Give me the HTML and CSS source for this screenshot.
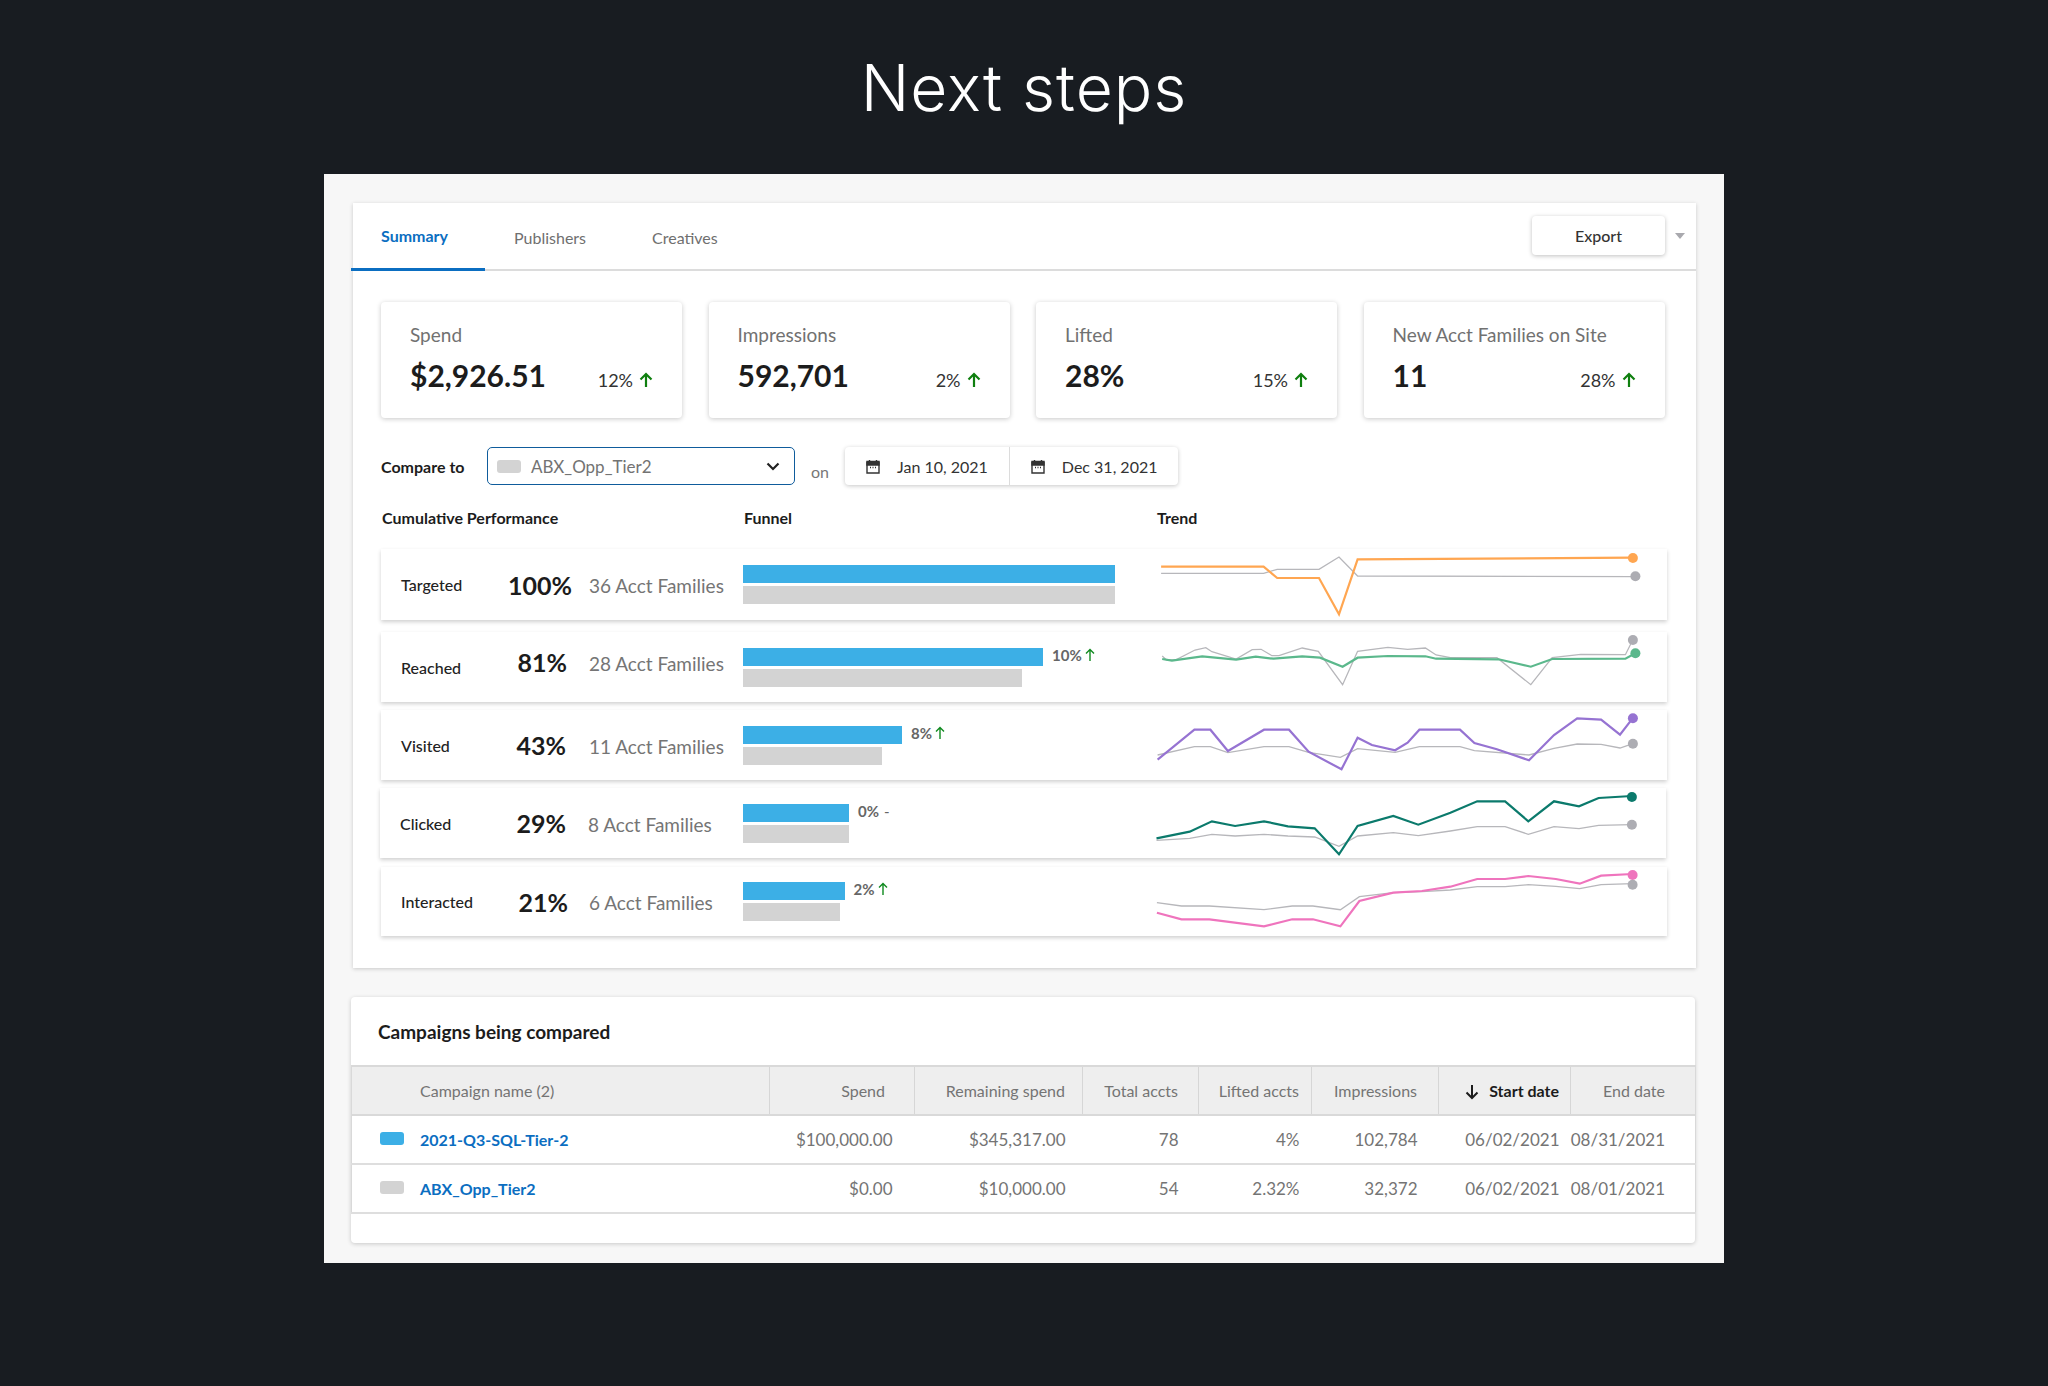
FILE: index.html
```html
<!DOCTYPE html>
<html>
<head>
    <title>Next steps</title>
    <meta name="viewport" content="width=device-width, initial-scale=1">
    <link rel="stylesheet" href="styles.css">
</head>
<body>
    <h1 class="pageTitle">Next steps</h1>

    <div class="frame">
        <div class="panel">
            <div class="tabBar">
                <a class="tab tabActive">Summary</a>
                <a class="tab">Publishers</a>
                <a class="tab">Creatives</a>
                <div class="tabActions">
                    <button class="exportButton">Export</button>
                    <span class="caret"></span>
                </div>
            </div>

            <div class="panelBody">
                <div class="cards">
                    <div class="card">
                        <div class="cardLabel">Spend</div>
                        <div class="cardNumbers">
                            <span class="cardValue">$2,926.51</span>
                            <span class="cardDelta">12% <svg class="arrowBig" viewBox="0 0 14 16"><path d="M7 15V2M1.5 7.5 7 2l5.500 5.500"/></svg></span>
                        </div>
                    </div>
                    <div class="card">
                        <div class="cardLabel">Impressions</div>
                        <div class="cardNumbers">
                            <span class="cardValue">592,701</span>
                            <span class="cardDelta">2% <svg class="arrowBig" viewBox="0 0 14 16"><path d="M7 15V2M1.5 7.5 7 2l5.500 5.500"/></svg></span>
                        </div>
                    </div>
                    <div class="card">
                        <div class="cardLabel">Lifted</div>
                        <div class="cardNumbers">
                            <span class="cardValue">28%</span>
                            <span class="cardDelta">15% <svg class="arrowBig" viewBox="0 0 14 16"><path d="M7 15V2M1.5 7.5 7 2l5.500 5.500"/></svg></span>
                        </div>
                    </div>
                    <div class="card">
                        <div class="cardLabel">New Acct Families on Site</div>
                        <div class="cardNumbers">
                            <span class="cardValue">11</span>
                            <span class="cardDelta">28% <svg class="arrowBig" viewBox="0 0 14 16"><path d="M7 15V2M1.5 7.5 7 2l5.500 5.500"/></svg></span>
                        </div>
                    </div>
                </div>

                <div class="compareRow">
                    <span class="compareLabel">Compare to</span>
                    <div class="compareSelect">
                        <span class="swatch swatchGray"></span>
                        <span class="compareValue">ABX_Opp_Tier2</span>
                        <svg class="chevron" viewBox="0 0 14 9"><path d="M1.500 1.500 7 7l5.500-5.500"/></svg>
                    </div>
                    <span class="compareOn">on</span>
                    <div class="dateRange">
                        <div class="dateItem">
                            <svg class="calendar" viewBox="0 0 14 15"><path d="M1 3.500h12v10.500H1z" fill="none"/><path d="M1 2.500h12v3.500H1z" fill="#333"/><path d="M3.500 1v2M10.500 1v2M4 8.500h1M6.500 8.500h1M9 8.500h1"/></svg>
                            Jan 10, 2021
                        </div>
                        <div class="dateItem">
                            <svg class="calendar" viewBox="0 0 14 15"><path d="M1 3.500h12v10.500H1z" fill="none"/><path d="M1 2.500h12v3.500H1z" fill="#333"/><path d="M3.500 1v2M10.500 1v2M4 8.500h1M6.500 8.500h1M9 8.500h1"/></svg>
                            Dec 31, 2021
                        </div>
                    </div>
                </div>

                <div class="perfHeader">
                    <span class="perfHeadCumulative">Cumulative Performance</span>
                    <span class="perfHeadFunnel">Funnel</span>
                    <span>Trend</span>
                </div>

                <div class="perfRows">
                    <div class="perfRow rowTargeted">
                        <span class="rowLabel">Targeted</span>
                        <span class="rowPct">100%</span>
                        <span class="rowFamilies">36 Acct Families</span>
                        <div class="funnel">
                            <div class="funnelLine"><div class="bar barBlue" style="width: 371.500px"></div></div>
                            <div class="bar barGray" style="width: 371.500px"></div>
                        </div>
                        <svg class="trend" viewBox="0 0 500 71">
                            <polyline class="lineGray" points="12.100,24.300 114.600,24.300 128.200,20.300 170,20.300 190,8 208.600,27 486.400,27.700"/>
                            <polyline class="lineMain" stroke="#ffa651" points="12.100,17.700 114.600,17.700 128.200,29 170,29 190,65.300 208.600,10.300 483.600,8.700"/>
                            <circle cx="486.400" cy="27.300" r="5" fill="#adadb3"/>
                            <circle cx="483.900" cy="9" r="5" fill="#ffa651"/>
                        </svg>
                    </div>

                    <div class="perfRow rowReached">
                        <span class="rowLabel">Reached</span>
                        <span class="rowPct">81%</span>
                        <span class="rowFamilies">28 Acct Families</span>
                        <div class="funnel">
                            <div class="funnelLine">
                                <div class="bar barBlue" style="width: 300px"></div>
                                <span class="funnelDelta">10% <svg class="arrowSmall" viewBox="0 0 10 14"><path d="M5 13V1.500M1 5.500l4-4 4 4"/></svg></span>
                            </div>
                            <div class="bar barGray" style="width: 279px"></div>
                        </div>
                        <svg class="trend" viewBox="0 0 500 70">
                            <polyline class="lineGray" points="13.200,24 17.500,28 26.400,28 46,18 56.800,15.700 62.900,19.700 87.100,27 103.200,17.700 112.100,17.300 122.900,23.700 130,23.700 153.200,16 169.300,19.300 193.600,52.700 208.600,19.300 238.900,15.300 258.600,17.300 276.400,16 287.100,23 301.400,25.700 347.900,25.700 381.800,52.700 403.200,25.700 431.800,22.300 476.400,22.700 483.600,8.300"/>
                            <polyline class="lineMain" stroke="#5bb88c" points="13.200,27 22.900,28.700 53.200,24.300 87.100,27.700 106.800,24.700 124.600,26.700 153.200,24.300 171,25.700 193.600,34.700 208.600,25.700 238.900,24 276.400,24.300 287.100,26.700 349.600,27.300 381.800,34.700 403.200,27 476.400,26.700 486.400,21.300"/>
                            <circle cx="483.900" cy="8" r="5" fill="#adadb3"/>
                            <circle cx="486.400" cy="21.300" r="5" fill="#5bb88c"/>
                        </svg>
                    </div>

                    <div class="perfRow rowVisited">
                        <span class="rowLabel">Visited</span>
                        <span class="rowPct">43%</span>
                        <span class="rowFamilies">11 Acct Families</span>
                        <div class="funnel">
                            <div class="funnelLine">
                                <div class="bar barBlue" style="width: 159px"></div>
                                <span class="funnelDelta">8% <svg class="arrowSmall" viewBox="0 0 10 14"><path d="M5 13V1.500M1 5.500l4-4 4 4"/></svg></span>
                            </div>
                            <div class="bar barGray" style="width: 139px"></div>
                        </div>
                        <svg class="trend" viewBox="0 0 500 70">
                            <polyline class="lineGray" points="8.600,45 45.400,36.700 61.400,36.700 78.900,42.700 115,36.700 140,36.700 159.600,42.300 191.400,47.300 208.600,38.700 246.100,42.300 270.400,36.700 311,36.700 325.400,40.700 380,45 405,38.300 428.200,34 452.100,34.300 471,38 483.900,33.700"/>
                            <polyline class="lineMain" stroke="#9673d2" points="8.600,49.700 45.400,19.700 61.400,19.700 78.900,41 115,19.700 140,19.700 159.600,41.700 192.500,59.300 208.600,27.700 222.900,35 246.100,40.300 258.600,32.700 270.400,19.700 311,19.700 325.400,33 347.900,39.300 380,50.300 405,25 428.200,8.300 452.100,9.700 471,24.700 483.600,8.300"/>
                            <circle cx="483.900" cy="33.700" r="5" fill="#adadb3"/>
                            <circle cx="483.900" cy="8.300" r="5" fill="#9673d2"/>
                        </svg>
                    </div>

                    <div class="perfRow rowClicked">
                        <span class="rowLabel">Clicked</span>
                        <span class="rowPct">29%</span>
                        <span class="rowFamilies">8 Acct Families</span>
                        <div class="funnel">
                            <div class="funnelLine">
                                <div class="bar barBlue" style="width: 106px"></div>
                                <span class="funnelDelta">0% <span class="deltaDash">-</span></span>
                            </div>
                            <div class="bar barGray" style="width: 106px"></div>
                        </div>
                        <svg class="trend" viewBox="-1 0 500 70">
                            <polyline class="lineGray" points="7.500,52.300 40.700,50.300 62.900,46.300 86.100,48 115,46.300 138.900,48 165.700,49 190,58.300 208.600,48 244.300,44.700 269.300,47.700 301.400,43 328.200,38.700 356.100,38.700 379.300,46.300 405,38.700 430,40.700 449.600,37.300 482.900,36.700"/>
                            <polyline class="lineMain" stroke="#0b7a6c" points="7.500,50.300 40.700,43.700 62.900,33.300 86.100,38 115,33.300 138.900,38.300 165.700,40.300 190,66.300 208.600,38 244.300,28 269.300,36.700 301.400,24.700 328.200,13.300 356.100,13.300 379.300,33.300 405,13.300 430,18.300 449.600,10 482.900,8"/>
                            <circle cx="482.900" cy="36.700" r="5" fill="#adadb3"/>
                            <circle cx="482.900" cy="9" r="5" fill="#0b7a6c"/>
                        </svg>
                    </div>

                    <div class="perfRow rowInteracted">
                        <span class="rowLabel">Interacted</span>
                        <span class="rowPct">21%</span>
                        <span class="rowFamilies">6 Acct Families</span>
                        <div class="funnel">
                            <div class="funnelLine">
                                <div class="bar barBlue" style="width: 101.500px"></div>
                                <span class="funnelDelta">2% <svg class="arrowSmall" viewBox="0 0 10 14"><path d="M5 13V1.500M1 5.500l4-4 4 4"/></svg></span>
                            </div>
                            <div class="bar barGray" style="width: 97px"></div>
                        </div>
                        <svg class="trend" viewBox="0 0 500 69">
                            <polyline class="lineGray" points="7.900,35.700 32.500,39 60.400,39 115,42.700 143.200,39 163.900,39 191.400,42.700 210.400,29.700 244.300,25.700 272.900,24.700 301.400,23 328.200,19.700 356.100,19.700 379.300,17.700 406.800,19.300 430.700,21.700 452.100,17.700 483.600,16.700"/>
                            <polyline class="lineMain" stroke="#ef74bd" points="7.900,45.700 32.500,52.300 60.400,52.300 115,59.300 143.200,52.300 163.900,52.300 191.400,59.300 210.400,34 244.300,25.700 272.900,24 301.400,19.700 328.200,12 356.100,12 379.300,9 406.800,12 430.700,16.700 452.100,8.700 483.600,7"/>
                            <circle cx="483.600" cy="8" r="5" fill="#ef74bd"/>
                            <circle cx="483.600" cy="17.700" r="5" fill="#adadb3"/>
                        </svg>
                    </div>
                </div>
            </div>
        </div>

        <div class="panel tablePanel">
            <h2 class="tableTitle">Campaigns being compared</h2>
            <table class="campaigns">
                <colgroup>
                    <col class="colName"><col class="colSpend"><col class="colRemaining"><col class="colTotal">
                    <col class="colLifted"><col class="colImpressions"><col class="colStart"><col class="colEnd">
                </colgroup>
                <thead>
                    <tr>
                        <th class="nameHead">Campaign name (2)</th>
                        <th class="spendHead">Spend</th>
                        <th>Remaining spend</th>
                        <th>Total accts</th>
                        <th>Lifted accts</th>
                        <th>Impressions</th>
                        <th class="sorted"><svg class="arrowDown" viewBox="0 0 14 16"><path d="M7 1v13M1.500 8.500 7 14l5.500-5.500"/></svg> Start date</th>
                        <th>End date</th>
                    </tr>
                </thead>
                <tbody>
                    <tr>
                        <td class="nameCell"><span class="swatch swatchBlue"></span><a class="campaignLink">2021-Q3-SQL-Tier-2</a></td>
                        <td>$100,000.00</td>
                        <td>$345,317.00</td>
                        <td>78</td>
                        <td>4%</td>
                        <td>102,784</td>
                        <td>06/02/2021</td>
                        <td>08/31/2021</td>
                    </tr>
                    <tr>
                        <td class="nameCell"><span class="swatch swatchGray"></span><a class="campaignLink">ABX_Opp_Tier2</a></td>
                        <td>$0.00</td>
                        <td>$10,000.00</td>
                        <td>54</td>
                        <td>2.32%</td>
                        <td>32,372</td>
                        <td>06/02/2021</td>
                        <td>08/01/2021</td>
                    </tr>
                </tbody>
            </table>
        </div>
    </div>
</body>
</html>
```

FILE: styles.css
```css
* {
    box-sizing: border-box;
}
body {
    margin: 0;
    min-height: 1386px;
    background: #181c21;
    font-family: "Lato", "Open Sans", sans-serif;
    color: #1c1c1c;
}
.pageTitle {
    height: 174px;
    margin: 0;
    padding-top: 48px;
    text-align: center;
    font-family: "Inter", sans-serif;
    font-size: 64px;
    font-weight: 300;
    line-height: 80px;
    letter-spacing: 1px;
    color: white;
}
.frame {
    width: 1400px;
    height: 1089px;
    margin: 0 auto;
    padding: 29px 28px 0 29px;
    background: #f7f7f7;
}

/* panels */
.panel {
    background: white;
    box-shadow: 0px 1px 4px #00000030;
    height: 765px;
}
.tabBar {
    display: flex;
    align-items: stretch;
    height: 68px;
    margin-left: -2px;
    border-bottom: 2px solid #dcdcdc;
}
.tab {
    display: flex;
    align-items: center;
    height: 68px;
    padding: 0 30px;
    font-size: 16px;
    color: #6f6f6f;
}
.tabActive {
    width: 134px;
    margin-right: -1px;
    border-bottom: 3px solid #0b6ec1;
    color: #0b6ec1;
    font-weight: 700;
}
.tab + .tab + .tab {
    margin-left: 6px;
}
.tabActions {
    display: flex;
    align-items: center;
    margin-left: auto;
    padding-right: 11px;
}
.exportButton {
    width: 133px;
    height: 39px;
    margin-bottom: 1px;
    border: 0;
    border-radius: 4px;
    background: white;
    box-shadow: 0px 1px 4px #00000040;
    font-family: inherit;
    font-size: 16px;
    font-weight: 500;
    color: #333;
}
.caret {
    margin-left: 10px;
    border-top: 6px solid #a9a9ae;
    border-left: 5px solid transparent;
    border-right: 5px solid transparent;
}
.panelBody {
    padding: 31px 29px 0 28px;
}

/* stat cards */
.cards {
    display: grid;
    grid-template-columns: repeat(4, 301px);
    column-gap: 26.5px;
}
.card {
    height: 116px;
    padding: 21px 29px 0;
    border-radius: 4px;
    box-shadow: 0px 1px 5px #00000038;
}
.cardLabel {
    font-size: 19px;
    line-height: 24px;
    color: #717171;
}
.cardNumbers {
    display: flex;
    justify-content: space-between;
    align-items: baseline;
    margin-top: 10px;
}
.cardValue {
    font-size: 30px;
    font-weight: 700;
    line-height: 36px;
    color: #1c1c1c;
}
.cardDelta {
    display: flex;
    align-items: center;
    gap: 6px;
    font-size: 18px;
    color: #333;
}
.arrowBig {
    width: 14px;
    height: 16px;
    fill: none;
    stroke: #0f7f0f;
    stroke-width: 2.200;
}

/* compare row */
.compareRow {
    display: flex;
    align-items: center;
    height: 38px;
    margin-top: 29px;
}
.compareLabel {
    width: 106px;
    font-size: 16px;
    font-weight: 700;
}
.compareSelect {
    display: flex;
    align-items: center;
    width: 308px;
    height: 38px;
    padding: 0 14px 0 9px;
    border: 1.500px solid #0f5c9c;
    border-radius: 5px;
}
.swatch {
    display: inline-block;
    flex: none;
    width: 24px;
    height: 13px;
    border-radius: 3px;
}
.swatchGray {
    background: #d3d3d3;
}
.swatchBlue {
    background: #3cafe6;
}
.compareValue {
    margin-left: 10px;
    font-size: 17px;
    color: #737373;
}
.chevron {
    width: 14px;
    height: 9px;
    margin-left: auto;
    fill: none;
    stroke: #222;
    stroke-width: 2.200;
}
.compareOn {
    margin: 10px 0 0 16px;
    font-size: 16px;
    color: #777;
}
.dateRange {
    display: flex;
    height: 38px;
    margin-left: 16px;
    border-radius: 4px;
    box-shadow: 0px 1px 4px #00000038;
}
.dateItem {
    display: flex;
    align-items: center;
    gap: 17px;
    height: 38px;
    padding: 0 21px;
    font-size: 16px;
    color: #333;
}
.dateItem + .dateItem {
    border-left: 1px solid #dcdcdc;
}
.calendar {
    width: 14px;
    height: 15px;
    fill: none;
    stroke: #333;
    stroke-width: 1.400;
}

/* cumulative performance */
.perfHeader {
    display: flex;
    align-items: center;
    height: 64px;
    padding-left: 1px;
    font-size: 16px;
    font-weight: 700;
}
.perfHeadCumulative {
    width: 362px;
}
.perfHeadFunnel {
    width: 413px;
}
.perfRows {
    display: flex;
    flex-direction: column;
    gap: 8px;
    width: 1286px;
}
.perfRow {
    display: grid;
    grid-template-columns: 127px 60px 175px 406px 500px;
    align-items: center;
    height: 70px;
    box-shadow: 0px 2px 4px #00000030;
}
.rowLabel {
    padding-left: 20px;
    font-size: 16px;
    font-weight: 500;
    color: #222;
}
.rowPct {
    text-align: right;
    font-size: 25px;
    font-weight: 700;
    color: #1c1c1c;
}
.rowFamilies {
    padding: 2px 0 0 21px;
    font-size: 19px;
    color: #757575;
    white-space: nowrap;
}
.rowTargeted {
    height: 71px;
    margin-bottom: 4px;
}
.rowReached .rowPct, .rowReached .rowFamilies {
    margin-bottom: 10px;
}
.rowReached .rowPct {
    padding-right: 1px;
}
.rowVisited .rowPct {
    padding-right: 2px;
}
.rowClicked {
    margin-left: -1px;
    width: 1286px;
}
.rowClicked .funnel {
    padding-left: 1px;
}
.rowClicked .rowPct {
    padding-right: 1px;
}
.rowInteracted {
    height: 69px;
    margin-top: 1px;
}
.funnel {
    display: flex;
    flex-direction: column;
    gap: 3px;
}
.funnelLine {
    display: flex;
    align-items: center;
    gap: 9px;
}
.bar {
    height: 18px;
}
.barBlue {
    background: #3cafe6;
}
.barGray {
    background: #d3d3d3;
}
.funnelDelta {
    display: flex;
    align-items: center;
    gap: 3px;
    margin-top: -4px;
    font-size: 15px;
    font-weight: 700;
    color: #666;
}
.deltaDash {
    font-weight: 400;
    margin-left: 2px;
}
.arrowSmall {
    width: 10px;
    height: 14px;
    fill: none;
    stroke: #0f8a1f;
    stroke-width: 1.400;
}
.trend {
    width: 500px;
    height: 100%;
    overflow: visible;
}
.lineMain {
    fill: none;
    stroke-width: 2.200;
}
.lineGray {
    fill: none;
    stroke: #b7b7bb;
    stroke-width: 1.300;
}

/* campaigns table */
.tablePanel {
    height: 246px;
    width: 1344px;
    margin: 29px 0 0 -2px;
    border-radius: 4px;
}
.tableTitle {
    display: flex;
    align-items: center;
    height: 68px;
    margin: 0;
    padding-left: 27px;
    font-size: 19px;
    font-weight: 700;
    color: #1c1c1c;
}
.campaigns {
    width: 1344px;
    table-layout: fixed;
    border-collapse: collapse;
    border: 1px solid #d9d9d9;
    border-width: 2px 1px 2px 1px;
}
.colName { width: 418px; }
.colSpend { width: 145px; }
.colRemaining { width: 168px; }
.colTotal { width: 116px; }
.colLifted { width: 113px; }
.colImpressions { width: 127px; }
.colStart { width: 132px; }
.colEnd { width: 125px; }
.campaigns th, .campaigns td {
    padding: 0;
    text-align: right;
    font-size: 16px;
    font-weight: 400;
    color: #747474;
    white-space: nowrap;
}
.campaigns th {
    height: 49px;
    background: #eeeeee;
    border-left: 1px solid #d6d6d6;
    border-bottom: 2px solid #d9d9d9;
}
.campaigns td {
    height: 49px;
    border-bottom: 2px solid #dedede;
    font-size: 17px;
}
.campaigns th:nth-child(2) { padding-right: 29px; }
.campaigns td:nth-child(2) { padding-right: 22px; }
.campaigns th:nth-child(3), .campaigns td:nth-child(3) { padding-right: 17px; }
.campaigns th:nth-child(4), .campaigns td:nth-child(4) { padding-right: 20px; }
.campaigns th:nth-child(5), .campaigns td:nth-child(5) { padding-right: 12px; }
.campaigns th:nth-child(6), .campaigns td:nth-child(6) { padding-right: 21px; }
.campaigns th:nth-child(7), .campaigns td:nth-child(7) { padding-right: 11px; }
.campaigns th:nth-child(8), .campaigns td:nth-child(8) { padding-right: 30px; }
.campaigns th.nameHead {
    padding-left: 68px;
    text-align: left;
    border-left: 0;
}
.campaigns th.sorted {
    font-weight: 700;
    color: #1c1c1c;
}
.arrowDown {
    width: 14px;
    height: 16px;
    margin-right: 6px;
    vertical-align: -3px;
    fill: none;
    stroke: #1c1c1c;
    stroke-width: 2;
}
.campaigns td.nameCell {
    padding-left: 28px;
    text-align: left;
}
.nameCell .swatch {
    margin-right: 16px;
    vertical-align: 1px;
}
.campaignLink {
    font-size: 16px;
    font-weight: 700;
    color: #0b6ec1;
}
```
